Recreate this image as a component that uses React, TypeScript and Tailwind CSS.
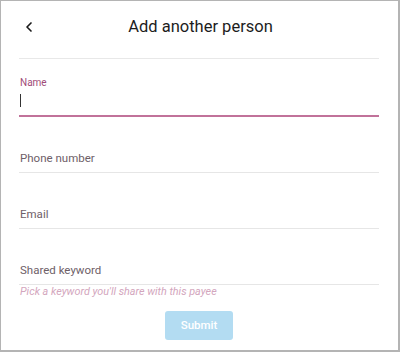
import { ChevronLeft } from 'lucide-react'

interface FieldProps {
  label: string
  helper?: string
}

function Field({ label, helper }: FieldProps) {
  return (
    <div className="flex flex-col">
      <div className="h-[56px] flex items-end pb-[6px] pl-[1px] border-b border-[#e6e6e6]">
        <span className="text-[11.5px] leading-[16px] text-[#6e6068]">{label}</span>
      </div>
      {helper && (
        <div className="pl-[1px] text-[10.8px] leading-[14px] italic text-[#d3a6bd]">{helper}</div>
      )}
    </div>
  )
}

export default function App() {
  return (
    <div
      className="w-[400px] h-[352px] bg-white border-t border-l border-r-2 border-b-2 border-[#b4b4b4] flex flex-col"
      style={{ fontFamily: 'Roboto, "Noto Sans", sans-serif' }}
    >
      {/* Header */}
      <div className="ml-[18px] mr-[19px] h-[58px] flex items-center border-b border-[#e8e8e8] relative">
        <button className="absolute left-[2px] top-[18px] text-[#1a1a1a]">
          <ChevronLeft size={16} strokeWidth={2.5} />
        </button>
        <h1 className="flex-1 text-center text-[16.5px] text-[#1c1c1c] pl-[3px] -mt-[5px]">
          Add another person
        </h1>
      </div>

      {/* Form */}
      <div className="ml-[18px] mr-[19px] flex flex-col">
        <div className="pt-[17px] flex flex-col border-b-2 border-[#c1729a]">
          <span className="text-[10px] leading-[14px] text-[#a14c78] pl-[1px]">Name</span>
          <div className="h-[25px] pt-[4px]">
            <div className="w-px h-[13px] bg-[#333] ml-[1px]" />
          </div>
        </div>
        <div className="flex flex-col">
          <Field label="Phone number" />
          <Field label="Email" />
          <Field label="Shared keyword" helper="Pick a keyword you'll share with this payee" />
        </div>
        <div className="flex justify-center mt-[12px]">
          <button className="w-[68px] h-[29px] rounded-[3px] bg-[#b3dcf2] text-white text-[11.5px] font-medium">
            Submit
          </button>
        </div>
      </div>
    </div>
  )
}
